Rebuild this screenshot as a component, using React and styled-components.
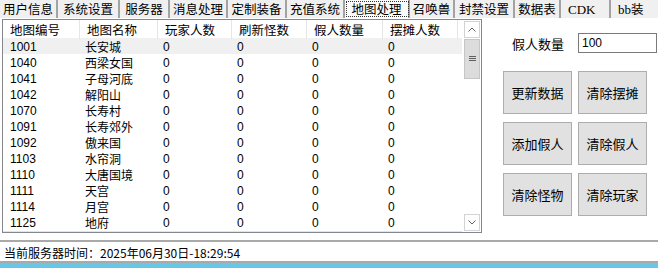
import React from "react"
import styled, { createGlobalStyle } from "styled-components"

const GlobalStyle = createGlobalStyle`
  html, body {
    margin: 0;
    padding: 0;
    background: #fff;
  }
  body {
    font-family: "Noto Sans CJK SC", "Liberation Sans", sans-serif;
    font-size: 12px;
    color: #000;
  }
`

const Window = styled.div`
  width: 658px;
  height: 268px;
  display: flex;
  flex-direction: column;
  overflow: hidden;
  background: #fff;
`

const TabBar = styled.div`
  display: flex;
  height: 18px;
  background: #f0f0f0;
`

const Tab = styled.div`
  box-sizing: border-box;
  width: ${(p) => p.$w}px;
  height: 18px;
  display: flex;
  align-items: center;
  justify-content: ${(p) => (p.$latin ? "flex-start" : "center")};
  padding-left: ${(p) => (p.$latin ? 7 : 0)}px;
  font-size: 12.5px;
  line-height: 1;
  border-right: ${(p) => (p.$last ? "none" : "2px solid #a3a3a3")};
  background: ${(p) => (p.$active ? "#fbfbfb" : "#f0f0f0")};
  outline: ${(p) => (p.$active ? "1px dotted #333" : "none")};
  outline-offset: -2px;
`

const LatinText = styled.span`
  font-family: "Liberation Serif", "DejaVu Serif", serif;
  font-weight: 400;
  font-size: 13px;
`

const Body = styled.div`
  display: flex;
  padding-top: 1px;
`

const ListBox = styled.div`
  box-sizing: border-box;
  margin-left: 2px;
  width: 480px;
  height: 214px;
  border: 1px solid #828790;
  box-shadow: inset -1px -1px 0 #e4e4e4;
  display: flex;
`

const Table = styled.div`
  width: 459px;
`

const Row = styled.div`
  display: grid;
  grid-template-columns: 77px 78px 74px 75px 76px 75px;
  height: ${(p) => (p.$head ? 18 : 16)}px;
  background: ${(p) => (p.$selected ? "#f0f0f0" : "transparent")};
`

const HeadCell = styled.div`
  display: flex;
  align-items: center;
  padding-left: 7px;
  border-right: 1px solid #e5e5e5;
  font-size: 12.5px;
`

const Cell = styled.div`
  display: flex;
  align-items: center;
  padding-left: ${(p) => (p.$first ? 7 : 5)}px;
  font-family: "Liberation Sans", "Noto Sans CJK SC", sans-serif;
  font-size: 12px;
`

const ScrollBar = styled.div`
  box-sizing: border-box;
  width: 19px;
  padding: 1px 1px 1px 2px;
  display: flex;
  flex-direction: column;
  background: #fff;
`

const Arrow = styled.div`
  box-sizing: border-box;
  height: 17px;
  border: 1px solid #d3d3d3;
  display: flex;
  align-items: center;
  justify-content: center;
`

const Track = styled.div`
  flex: 1;
  display: flex;
  flex-direction: column;
  padding-top: 1px;
`

const Thumb = styled.div`
  box-sizing: border-box;
  height: 40px;
  background: #dcdcdc;
  border: 1px solid #c6c6c6;
  display: flex;
  align-items: center;
  justify-content: center;
`

const Side = styled.div`
  padding: 14px 0 0 21px;
`

const FieldRow = styled.div`
  display: flex;
  align-items: center;
  padding-left: 9px;
  gap: 14px;
`

const Label = styled.span`
  font-size: 13px;
`

const Input = styled.div`
  box-sizing: border-box;
  width: 79px;
  height: 20px;
  border: 1px solid #7a7a7a;
  padding-left: 3px;
  display: flex;
  align-items: center;
  font-family: "Liberation Sans", sans-serif;
  font-size: 12px;
`

const ButtonGrid = styled.div`
  margin-top: 18px;
  display: grid;
  grid-template-columns: 69px 69px;
  grid-auto-rows: 43px;
  column-gap: 6px;
  row-gap: 8px;
`

const Button = styled.div`
  box-sizing: border-box;
  border: 1px solid #adadad;
  background: #e1e1e1;
  display: flex;
  align-items: center;
  justify-content: center;
  font-size: 13px;
`

const StatusLine = styled.div`
  margin-top: 7px;
  border-top: 2px solid #a9a9a9;
  height: 18px;
  display: flex;
  align-items: center;
  padding-left: 4px;
  padding-top: 1px;
  font-size: 12px;
`

const BottomBar = styled.div`
  flex: 1;
  border-top: 2px solid #a9a9a9;
  background: #67c7e7;
`

const tabs = [
  ["用户信息", 58],
  ["系统设置", 62],
  ["服务器", 50],
  ["消息处理", 58],
  ["定制装备", 59],
  ["充值系统", 58],
  ["地图处理", 65, true],
  ["召唤兽", 45],
  ["封禁设置", 60],
  ["数据表", 46],
  ["CDK", 50, false, true],
  ["bb装", 47, false, true],
]

const columns = ["地图编号", "地图名称", "玩家人数", "刷新怪数", "假人数量", "摆摊人数"]

const maps = [
  ["1001", "长安城"],
  ["1040", "西梁女国"],
  ["1041", "子母河底"],
  ["1042", "解阳山"],
  ["1070", "长寿村"],
  ["1091", "长寿郊外"],
  ["1092", "傲来国"],
  ["1103", "水帘洞"],
  ["1110", "大唐国境"],
  ["1111", "天宫"],
  ["1114", "月宫"],
  ["1125", "地府"],
]

const buttons = ["更新数据", "清除摆摊", "添加假人", "清除假人", "清除怪物", "清除玩家"]

const Chevron = ({ down }) => (
  <svg width="8" height="5" viewBox="0 0 8 5">
    <polyline
      points={down ? "0.5,0.5 4,4 7.5,0.5" : "0.5,4.5 4,1 7.5,4.5"}
      fill="none"
      stroke="#606060"
      strokeWidth="1"
    />
  </svg>
)

const Grip = () => (
  <svg width="7" height="6" viewBox="0 0 7 6">
    <path d="M0 0.5h7M0 2.5h7M0 4.5h7" stroke="#606060" strokeWidth="1" />
  </svg>
)

const renderTabLabel = (name) => {
  if (name === "CDK") return <LatinText>CDK</LatinText>
  if (name === "bb装")
    return (
      <>
        <LatinText>bb</LatinText>装
      </>
    )
  return name
}

const App = () => (
  <Window>
    <GlobalStyle />
    <TabBar>
      {tabs.map(([name, w, active, latin], i) => (
        <Tab
          key={name}
          $w={w}
          $active={active}
          $latin={latin}
          $last={i === tabs.length - 1}
        >
          {renderTabLabel(name)}
        </Tab>
      ))}
    </TabBar>

    <Body>
      <ListBox>
        <Table>
          <Row $head>
            {columns.map((c) => (
              <HeadCell key={c}>{c}</HeadCell>
            ))}
          </Row>
          {maps.map(([id, name], i) => (
            <Row key={id} $selected={i === 0}>
              <Cell $first>{id}</Cell>
              <Cell>{name}</Cell>
              <Cell>0</Cell>
              <Cell>0</Cell>
              <Cell>0</Cell>
              <Cell>0</Cell>
            </Row>
          ))}
        </Table>
        <ScrollBar>
          <Arrow>
            <Chevron />
          </Arrow>
          <Track>
            <Thumb>
              <Grip />
            </Thumb>
          </Track>
          <Arrow>
            <Chevron down />
          </Arrow>
        </ScrollBar>
      </ListBox>

      <Side>
        <FieldRow>
          <Label>假人数量</Label>
          <Input>100</Input>
        </FieldRow>
        <ButtonGrid>
          {buttons.map((b) => (
            <Button key={b}>{b}</Button>
          ))}
        </ButtonGrid>
      </Side>
    </Body>

    <StatusLine>当前服务器时间：2025年06月30日-18:29:54</StatusLine>
    <BottomBar />
  </Window>
)

export default App
